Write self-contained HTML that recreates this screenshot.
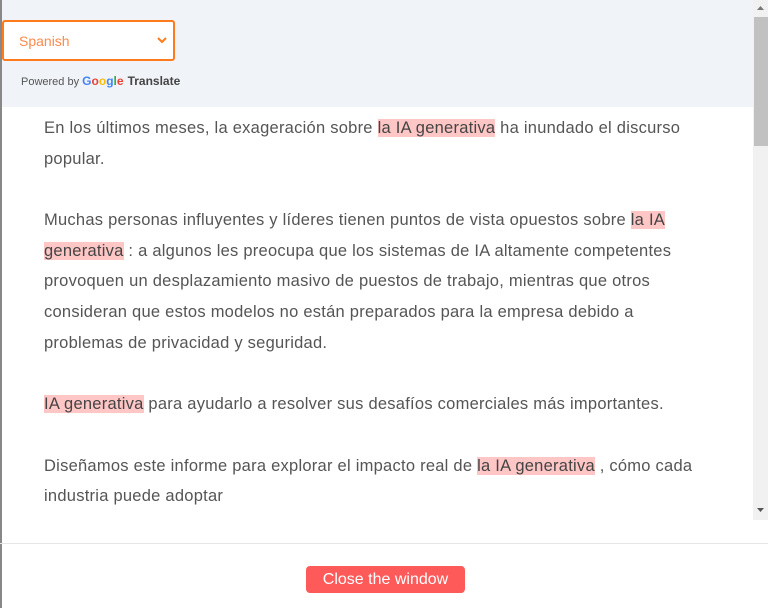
<!DOCTYPE html>
<html><head><meta charset="utf-8"><style>
*{margin:0;padding:0;box-sizing:border-box}
body{width:768px;height:608px;background:#fff;font-family:"Liberation Sans",sans-serif;position:relative;overflow:hidden}
.lb{position:absolute;left:0;top:0;width:2px;height:608px;background:#888}
.hdr{position:absolute;left:2px;top:0;width:751px;height:107px;background:#f0f3f7}
.sel{position:absolute;left:2px;top:20px;width:173px;height:41px;border:2px solid #ff7a1a;border-radius:3px;background:#fff;color:#ff8a4a;font-size:14px;padding:11px 0 0 15px}
.sel svg{position:absolute;right:6px;top:14px}
.pw{position:absolute;left:21px;top:74px;font-size:11px;color:#555}
.pw b{color:#444;font-weight:bold;font-size:12px;margin-left:4px}
.g{font-weight:bold;font-size:12px}
.sb{position:absolute;left:753px;top:0;width:15px;height:520px;background:#f1f1f1}
.th{position:absolute;left:754px;top:17px;width:14px;height:129px;background:#c1c1c1}
.txt{position:absolute;left:44px;top:113px;font-size:16.5px;letter-spacing:0.25px;color:#555;line-height:30.7px}
.txt div{white-space:nowrap;height:30.7px}
.h{background:#ffc6c6;color:#444}
.dv{position:absolute;left:0;top:543px;width:768px;height:1px;background:#e6e6e6}
.btn{position:absolute;left:306px;top:566px;width:159px;height:27px;background:#ff5a5a;border-radius:4px;color:#fff;font-size:16px;text-align:center;line-height:27px}
</style></head><body>
<div class="hdr"></div>
<div class="lb"></div>
<div class="sel">Spanish<svg width="10" height="8" viewBox="0 0 10 8"><path d="M1 2l4 4 4-4" stroke="#ff7a1a" stroke-width="2" fill="none"/></svg></div>
<div class="pw">Powered by <span class="g"><span style="color:#4285f4">G</span><span style="color:#ea4335">o</span><span style="color:#fbbc05">o</span><span style="color:#4285f4">g</span><span style="color:#34a853">l</span><span style="color:#ea4335">e</span></span><b>Translate</b></div>
<div class="sb"></div><div class="th"></div>
<svg style="position:absolute;left:756px;top:5px" width="9" height="6"><path d="M1 5h7L4.5 1z" fill="#777"/></svg>
<svg style="position:absolute;left:756px;top:507px" width="9" height="6"><path d="M1 1h7L4.5 5z" fill="#555"/></svg>
<div class="txt">
<div>En los últimos meses, la exageración sobre <span class="h">la IA generativa</span> ha inundado el discurso</div>
<div>popular.</div>
<div></div>
<div>Muchas personas influyentes y líderes tienen puntos de vista opuestos sobre <span class="h">la IA</span></div>
<div><span class="h">generativa</span> : a algunos les preocupa que los sistemas de IA altamente competentes</div>
<div>provoquen un desplazamiento masivo de puestos de trabajo, mientras que otros</div>
<div>consideran que estos modelos no están preparados para la empresa debido a</div>
<div>problemas de privacidad y seguridad.</div>
<div></div>
<div><span class="h">IA generativa</span> para ayudarlo a resolver sus desafíos comerciales más importantes.</div>
<div></div>
<div>Diseñamos este informe para explorar el impacto real de <span class="h">la IA generativa</span> , cómo cada</div>
<div>industria puede adoptar</div>
</div>
<div class="dv"></div>
<div class="btn">Close the window</div>
</body></html>
